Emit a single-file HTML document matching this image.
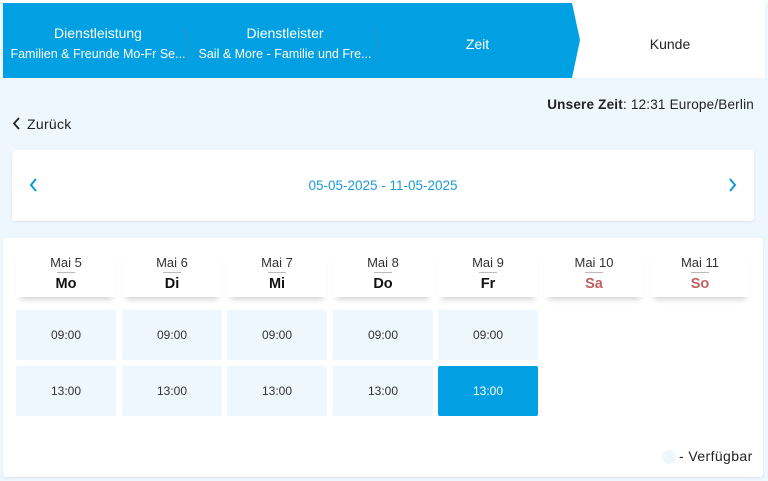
<!DOCTYPE html>
<html><head><meta charset="utf-8"><style>
*{margin:0;padding:0;box-sizing:border-box}
body{width:768px;height:481px;background:#eef6fe;font-family:"Liberation Sans",sans-serif;position:relative;overflow:hidden;color:#222}
.top{position:absolute;left:0;top:0;width:768px;height:3px;background:#fff}
.bar{position:absolute;left:3px;top:3px;width:762px;height:75px;background:#fff}
.blue{position:absolute;left:3px;top:3px;width:580px;height:75px}
.step{position:absolute;top:3px;height:75px;color:#fff;text-align:center;font-size:13px}
.t1{position:absolute;top:22px;width:100%;font-size:14px}
.t2{position:absolute;top:44px;width:100%;font-size:12.5px}
.card{position:absolute;left:12px;top:150px;width:742px;height:71px;background:#fff;border-radius:3px;box-shadow:0 1px 2px #d8e4ee}
.cal{position:absolute;left:3px;top:238px;width:760px;height:239px;background:#fff;border-radius:3px;box-shadow:0 1px 2px #d8e4ee}
.hd{position:absolute;top:250px;width:100px;height:47px;background:#fff;text-align:center;box-shadow:0 6px 6px -4px rgba(0,0,0,.2)}
.hd .d{position:absolute;top:5px;width:100%;font-size:13px;color:#333}
.hd .ln{position:absolute;left:41px;top:22px;width:18px;height:1px;background:#bbb}
.hd .w{position:absolute;top:26px;width:100%;font-size:14.5px;font-weight:bold;color:#111}
.sl{position:absolute;width:100px;height:50px;background:#eef6fe;border-radius:2px;text-align:center;line-height:50px;font-size:12px;color:#333}
</style></head><body>
<div class="top"></div>
<div class="bar"></div>
<svg class="blue" width="580" height="75"><polygon points="0,0 569,0 577,37 569,75 0,75" fill="#00a0e2"/>
<polyline points="181,23 186,40 181,58" fill="none" stroke="#2b8fc4" stroke-width="1"/>
<polyline points="370,23 375,40 370,58" fill="none" stroke="#2b8fc4" stroke-width="1"/></svg>
<div class="step" style="left:3px;width:190px"><div class="t1">Dienstleistung</div><div class="t2">Familien &amp; Freunde Mo-Fr Se...</div></div>
<div class="step" style="left:190px;width:190px"><div class="t1">Dienstleister</div><div class="t2">Sail &amp; More - Familie und Fre...</div></div>
<div class="step" style="left:380px;width:195px"><div class="t1" style="top:33px">Zeit</div></div>
<div class="step" style="left:575px;width:190px;color:#222"><div class="t1" style="top:33px">Kunde</div></div>
<div style="position:absolute;right:14px;top:97px;font-size:13.5px;color:#222;letter-spacing:.2px"><b>Unsere Zeit</b>: 12:31 Europe/Berlin</div>
<div style="position:absolute;left:12px;top:116px;font-size:14px;color:#222;letter-spacing:.3px"><svg width="9" height="13" style="vertical-align:-1px;margin-right:6px"><polyline points="7,1 2,6.5 7,12" fill="none" stroke="#222" stroke-width="1.8"/></svg>Zurück</div>
<div class="card">
<svg style="position:absolute;left:16px;top:28px" width="10" height="14"><polyline points="8,1 3,7 8,13" fill="none" stroke="#0a9ad8" stroke-width="2"/></svg>
<div style="position:absolute;left:0;width:100%;top:28px;text-align:center;color:#1d9ad6;font-size:13.5px">05-05-2025 - 11-05-2025</div>
<svg style="position:absolute;right:16px;top:28px" width="10" height="14"><polyline points="2,1 7,7 2,13" fill="none" stroke="#0a9ad8" stroke-width="2"/></svg>
</div>
<div class="cal"></div>
<div class="hd" style="left:16px"><div class="d">Mai 5</div><div class="ln"></div><div class="w">Mo</div></div>
<div class="hd" style="left:122px"><div class="d">Mai 6</div><div class="ln"></div><div class="w">Di</div></div>
<div class="hd" style="left:227px"><div class="d">Mai 7</div><div class="ln"></div><div class="w">Mi</div></div>
<div class="hd" style="left:333px"><div class="d">Mai 8</div><div class="ln"></div><div class="w">Do</div></div>
<div class="hd" style="left:438px"><div class="d">Mai 9</div><div class="ln"></div><div class="w">Fr</div></div>
<div class="hd" style="left:544px"><div class="d">Mai 10</div><div class="ln"></div><div class="w" style="color:#c0615f">Sa</div></div>
<div class="hd" style="left:650px"><div class="d">Mai 11</div><div class="ln"></div><div class="w" style="color:#c0615f">So</div></div>
<div class="sl" style="left:16px;top:310px">09:00</div><div class="sl" style="left:16px;top:366px">13:00</div>
<div class="sl" style="left:122px;top:310px">09:00</div><div class="sl" style="left:122px;top:366px">13:00</div>
<div class="sl" style="left:227px;top:310px">09:00</div><div class="sl" style="left:227px;top:366px">13:00</div>
<div class="sl" style="left:333px;top:310px">09:00</div><div class="sl" style="left:333px;top:366px">13:00</div>
<div class="sl" style="left:438px;top:310px">09:00</div><div class="sl" style="left:438px;top:366px;background:#00a0e2;color:#fff">13:00</div>
<div style="position:absolute;left:662px;top:450px;width:14px;height:14px;border-radius:50%;background:#eef6fe"></div>
<div style="position:absolute;left:679px;top:448px;font-size:14px;color:#222;letter-spacing:.4px">- Verfügbar</div>
</body></html>
